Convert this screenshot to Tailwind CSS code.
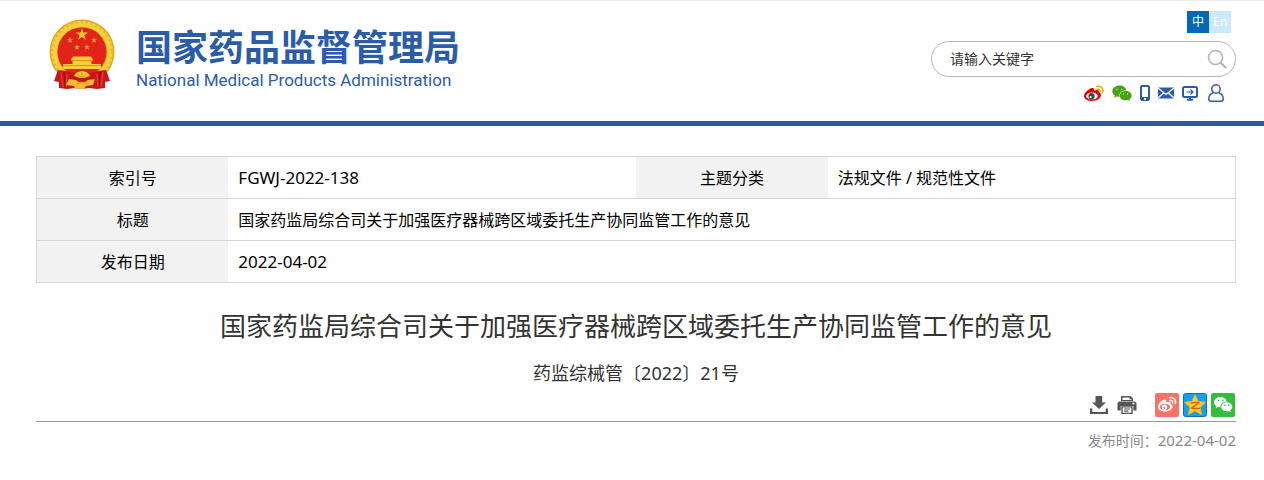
<!DOCTYPE html>
<html lang="zh-CN">
<head>
    <meta charset="UTF-8">
    <meta name="viewport" content="width=device-width, initial-scale=1.0">
    <title>国家药监局综合司关于加强医疗器械跨区域委托生产协同监管工作的意见</title>
    <script src="https://cdn.jsdelivr.net/npm/@tailwindcss/browser@4"></script>
</head>
<body class="bg-white font-['Noto_Sans','Noto_Sans_CJK_SC',sans-serif] text-black">
    <!-- Header -->
    <header class="border-t border-t-[#ebebeb] border-b-5 border-b-[#2a5caa] pl-9 pr-7">
        <div class="flex justify-between">
            <a href="#" class="flex items-start pl-3 pt-4 text-[#2a5caa]">
                <svg class="w-17 h-18 mt-0.5" viewBox="0 0 68 72" aria-hidden="true">
                    <circle cx="34" cy="33" r="32.500" fill="#dfa81c"/>
                    <circle cx="34" cy="33" r="28" fill="none" stroke="#f3cf3a" stroke-width="6"/>
                    <circle cx="34" cy="33" r="30" fill="none" stroke="#e6b426" stroke-width="2" stroke-dasharray="2 3"/>
                    <circle cx="34" cy="33" r="24.500" fill="#e2231a"/>
                    <path fill="#f0c52d" d="M34 9l1.500 4.400h4.700l-3.800 2.800 1.400 4.500-3.800-2.700-3.800 2.700 1.400-4.500-3.800-2.800h4.700z"/>
                    <path id="star" fill="#eda135" d="M22 18l.8 2.200h2.300l-1.900 1.400.7 2.300-1.900-1.400-1.900 1.400.7-2.300-1.900-1.400h2.300z"/>
                    <use href="#star" x="24"/>
                    <use href="#star" x="7" y="7"/>
                    <use href="#star" x="17" y="7"/>
                    <path fill="#f5ce3b" d="M24 39l1.500-1.500h17L44 39l1.500 2.500h-2V45H53v5H15v-5h9.500v-3.500h-2z"/>
                    <path stroke="#e58a26" stroke-width="1" d="M24 41.500h20M15 46.500h38"/>
                    <path fill="#c9141b" d="M10 51l8 1 9 2h14l9-2 8-1 4 11-5 1v6l-8 1-8-1-7 1-7-1-8 1-8-1v-6l-5-1z"/>
                    <path fill="none" stroke="#e8392b" stroke-width="1.500" d="M13 53l2 15M55 53l-2 15M19 55l-1 13M49 55l1 13"/>
                    <path fill="none" stroke="#8f0d14" stroke-width="1" d="M16 53l1 16M52 53l-1 16"/>
                    <path fill="#f4cd3a" d="M26 57l1-2 3-2 4-1 4 1 3 2 1 2-6 2h-4z"/>
                    <path fill="#efbd2c" d="M21 60l7 1 3 2h6l3-2 7-1-2 6-7 1-2 3h-4l-2-1-2 1h-1l-1-3-8-1z"/>
                    <path fill="none" stroke="#cf7c18" stroke-width=".8" d="M30 55l3 4M38 55l-3 4M34 53v6M29 65q5-4 10 0"/>
                </svg>
                <span class="flex flex-col pl-5 pt-[7px]">
                    <span class="text-[36px] leading-12 font-bold">国家药品监督管理局</span>
                    <span class="font-[Roboto,sans-serif] text-[17px] leading-4">National Medical Products Administration</span>
                </span>
            </a>

            <div class="flex flex-col items-end w-80 h-30 pt-2.5">
                <div class="flex mr-[5px] text-xs text-white text-center">
                    <a href="#" class="size-5.5 leading-5.5 bg-[#0068b7]">中</a>
                    <a href="#" class="size-5.5 leading-5.5 bg-[#cae8ff]">En</a>
                </div>
                <form class="flex items-center w-[305px] h-9 mt-2 pl-4.5 pr-2 border border-[#b5b5b5] rounded-full">
                    <input type="text" aria-label="请输入关键字" placeholder="请输入关键字" class="min-w-0 flex-1 text-sm outline-none placeholder:text-[#333]">
                    <button type="button" aria-label="搜索">
                        <svg class="size-5" viewBox="0 0 20 20" fill="none" stroke="#b5b5b5" stroke-width="1.500">
                            <circle cx="8.500" cy="8.500" r="7"/>
                            <path d="M13.500 13.500L19 19" stroke-width="2"/>
                        </svg>
                    </button>
                </form>
                <nav class="flex items-center gap-2 h-5 mt-1.5 mr-3">
                    <a href="#" aria-label="微博">
                        <svg class="w-5 h-4" viewBox="0 0 20 16">
                            <path fill="#e10007" d="M8.500 3C6 2.500 0 7.500 0 11c0 3 4 5 8 5 5 0 9-3 9-6 0-1.600-1-2.300-2.200-2.700.8-2.300-1.500-2.800-4.800-1.500C10.500 4.500 10 3.200 8.500 3z"/>
                            <ellipse cx="8" cy="11" rx="5.800" ry="3.600" fill="#fff"/>
                            <circle cx="7.500" cy="11.200" r="3.100" fill="#444"/>
                            <circle cx="6.600" cy="12" r="1" fill="#fff"/>
                            <path fill="none" stroke="#f2a900" stroke-width="1.600" stroke-linecap="round" d="M12.800 1.500c4-1.200 7 2 5.800 6M13.300 4.200c1.800-.4 3 .8 2.600 2.500"/>
                        </svg>
                    </a>
                    <a href="#" aria-label="微信">
                        <svg class="w-5 h-4" viewBox="0 0 20 16">
                            <path fill="#45a50f" d="M7.500.5C3.400.5.300 3 .300 6.200c0 1.900 1 3.400 2.700 4.400l-.8 2.200 2.700-1.400c.9.300 1.700.4 2.600.4-.8-4 2.700-6.800 6.900-6.600C13.700 2.500 11 .5 7.500.5z"/>
                            <path fill="#45a50f" d="M13.600 6c-3.400 0-5.800 2-5.800 4.700s2.400 4.600 5.800 4.600c.8 0 1.500-.1 2.200-.3l2.200 1-.6-1.800c1.400-.9 2.300-2 2.300-3.500C19.700 8 17 6 13.600 6z"/>
                            <path fill="#fff" d="M4.500 3.800h1v1h-1zM9.200 3.800h1v1h-1zM11.200 8.500h1v1h-1zM15 8.500h1v1h-1z"/>
                        </svg>
                    </a>
                    <a href="#" aria-label="手机">
                        <svg class="w-2.5 h-4" viewBox="0 0 10 16">
                            <path fill="#2a5caa" fill-rule="evenodd" d="M1.500 0h7L10 1.500v13L8.500 16h-7L0 14.500v-13zM2 2v10h6V2zM4 13v2h2v-2z"/>
                        </svg>
                    </a>
                    <a href="#" aria-label="邮箱">
                        <svg class="w-4 h-4" viewBox="0 0 16 16">
                            <path fill="#2a5caa" d="M0 2.500h16v11H0z"/>
                            <path fill="none" stroke="#fff" stroke-width="1.300" d="M0 3l8 6.500L16 3M0 13l5.500-5M16 13l-5.500-5"/>
                        </svg>
                    </a>
                    <a href="#" aria-label="网站">
                        <svg class="w-4 h-4" viewBox="0 0 16 16" fill="none" stroke="#2a5caa">
                            <rect x="1" y="2" width="14" height="10" rx="1.500" stroke-width="2"/>
                            <path d="M4.500 7h6M8.500 4.500L11 7 8.500 9.500" stroke-width="1.200"/>
                            <path d="M8 12v2.500M5 14.700h6" stroke-width="2"/>
                        </svg>
                    </a>
                    <a href="#" aria-label="个人中心" class="pl-0.5">
                        <svg class="w-4 h-4.5" viewBox="0 0 16 18" fill="none" stroke="#3c5aa8" stroke-width="1.500">
                            <circle cx="8" cy="5" r="4.200"/>
                            <path d="M5 8.800C2.500 10 .8 12 .8 15c0 1.500.7 2.200 2 2.200h10.400c1.300 0 2-.7 2-2.200 0-3-1.700-5-4.200-6.200"/>
                        </svg>
                    </a>
                </nav>
            </div>
        </div>
    </header>

    <!-- Document -->
    <main class="pl-9 pr-7 pt-7.5">
        <table class="w-full table-fixed border-collapse border border-[#d6d6d6] text-base leading-6">
            <colgroup>
                <col class="w-[16%]">
                <col class="w-[34%]">
                <col class="w-[16%]">
                <col class="w-[34%]">
            </colgroup>
            <tbody>
                <tr class="h-10.5 border-b border-[#d6d6d6]">
                    <th scope="row" class="bg-[#f2f2f2] font-normal">索引号</th>
                    <td class="px-2.5 text-[17px]">FGWJ-2022-138</td>
                    <th scope="row" class="bg-[#f2f2f2] font-normal">主题分类</th>
                    <td class="px-2.5">法规文件 / 规范性文件</td>
                </tr>
                <tr class="h-10.5 border-b border-[#d6d6d6]">
                    <th scope="row" class="bg-[#f2f2f2] font-normal">标题</th>
                    <td colspan="3" class="px-2.5">国家药监局综合司关于加强医疗器械跨区域委托生产协同监管工作的意见</td>
                </tr>
                <tr class="h-10.5">
                    <th scope="row" class="bg-[#f2f2f2] font-normal">发布日期</th>
                    <td colspan="3" class="px-2.5 text-[17px]">2022-04-02</td>
                </tr>
            </tbody>
        </table>

        <h1 class="mt-6 text-[26px] leading-9.5 text-center text-[#333]">国家药监局综合司关于加强医疗器械跨区域委托生产协同监管工作的意见</h1>
        <p class="mt-3.5 text-lg leading-7 text-center text-[#333]">药监综械管〔2022〕21号</p>

        <div class="flex justify-end items-center h-7 mt-1.5 mr-px pb-1 gap-1">
            <button type="button" aria-label="下载" class="mr-1">
                <svg class="size-5" viewBox="0 0 20 20" fill="#555">
                    <path d="M6.500 1h6.800v6.500H17L10 14 3 7.500h3.500z"/>
                    <path d="M1 13.500h2.300V17h13.400v-3.500H19V19H1z"/>
                </svg>
            </button>
            <button type="button" aria-label="打印" class="mr-3.5">
                <svg class="size-5" viewBox="0 0 20 20">
                    <path fill="#555" fill-rule="evenodd" d="M4 1h9.500L16 3.500V6H4zM5.500 2.500V5h9V4.300h-2V2.500z"/>
                    <path fill="#555" d="M2 6.500h16l1.500 1.500v7.500h-3.200V11H3.700v4.500H.5V8z"/>
                    <path fill="#fff" d="M15.500 7.800h2v1.500h-2z"/>
                    <path fill="#555" fill-rule="evenodd" d="M4.300 11.300h11.400V19H4.300zM5.700 12.500v5.200h8.600v-5.200z"/>
                    <path stroke="#555" stroke-width="1.200" d="M7 14h6M7 16.200h4.500"/>
                </svg>
            </button>
            <a href="#" aria-label="分享到微博">
                <svg class="size-6" viewBox="0 0 24 24">
                    <rect width="24" height="24" rx="2" fill="#f87365"/>
                    <path fill="#fff" d="M10 6.500C7.500 6 3 10.500 3 14c0 2.800 3.300 4.500 7 4.500 4.600 0 7.500-2.500 7.500-5 0-1.500-1-2.200-2.200-2.500.6-2-1-2.500-4-1.500.2-1.500-.1-2.700-1.300-3z"/>
                    <ellipse cx="10" cy="14" rx="5.200" ry="3.300" fill="#f87365"/>
                    <circle cx="9.500" cy="14.200" r="2.600" fill="#fff"/>
                    <circle cx="9" cy="14.800" r="1" fill="#f87365"/>
                    <path fill="none" stroke="#fff" stroke-width="1.500" stroke-linecap="round" d="M14.500 4.800c4-1 7 2 5.800 6M15 7.500c1.900-.4 3 .8 2.600 2.500"/>
                </svg>
            </a>
            <a href="#" aria-label="分享到QQ空间">
                <svg class="size-6" viewBox="0 0 24 24">
                    <rect x=".5" y=".5" width="23" height="23" rx="2" fill="#12a0f0" stroke="#0b6bc0"/>
                    <path fill="#ffce1f" stroke="#f5a81a" stroke-width=".8" stroke-linejoin="round" d="M12 1.500l3.200 6.800 7.300.9-5.400 5 1.700 7.600-6.800-3.900-6.800 3.900 1.700-7.600-5.400-5 7.300-.9z"/>
                    <path fill="none" stroke="#d9601a" stroke-width="1.500" d="M8 10q4-.8 7.500 0L9 15q4 1 8 .2"/>
                </svg>
            </a>
            <a href="#" aria-label="分享到微信">
                <svg class="size-6" viewBox="0 0 24 24">
                    <rect width="24" height="24" rx="2" fill="#36bd3e"/>
                    <path fill="#fff" d="M9.500 4C5.800 4 3 6.300 3 9.200c0 1.700.9 3 2.400 4l-.7 2.100 2.500-1.300c.8.200 1.500.3 2.300.3-.6-3.500 2.400-6 6.300-5.900C15 5.800 12.600 4 9.500 4z"/>
                    <path fill="#fff" d="M15.700 9.300c-3.100 0-5.400 2-5.400 4.500s2.300 4.400 5.400 4.400c.7 0 1.300-.1 2-.3l2 1.100-.5-1.800c1.200-.8 2.100-2 2.100-3.400 0-2.500-2.500-4.500-5.600-4.500z"/>
                    <path fill="#36bd3e" d="M6.700 6.800h1.500v1.500H6.700zM11 6.800h1.500v1.500H11zM13.300 11.600h1.300v1.300h-1.300zM17 11.600h1.300v1.300H17z"/>
                </svg>
            </a>
        </div>

        <p class="border-t border-[#999] pt-1.5 text-sm leading-6 text-right text-[#888]">发布时间：<time datetime="2022-04-02" class="text-[15px]">2022-04-02</time></p>
    </main>
</body>
</html>
